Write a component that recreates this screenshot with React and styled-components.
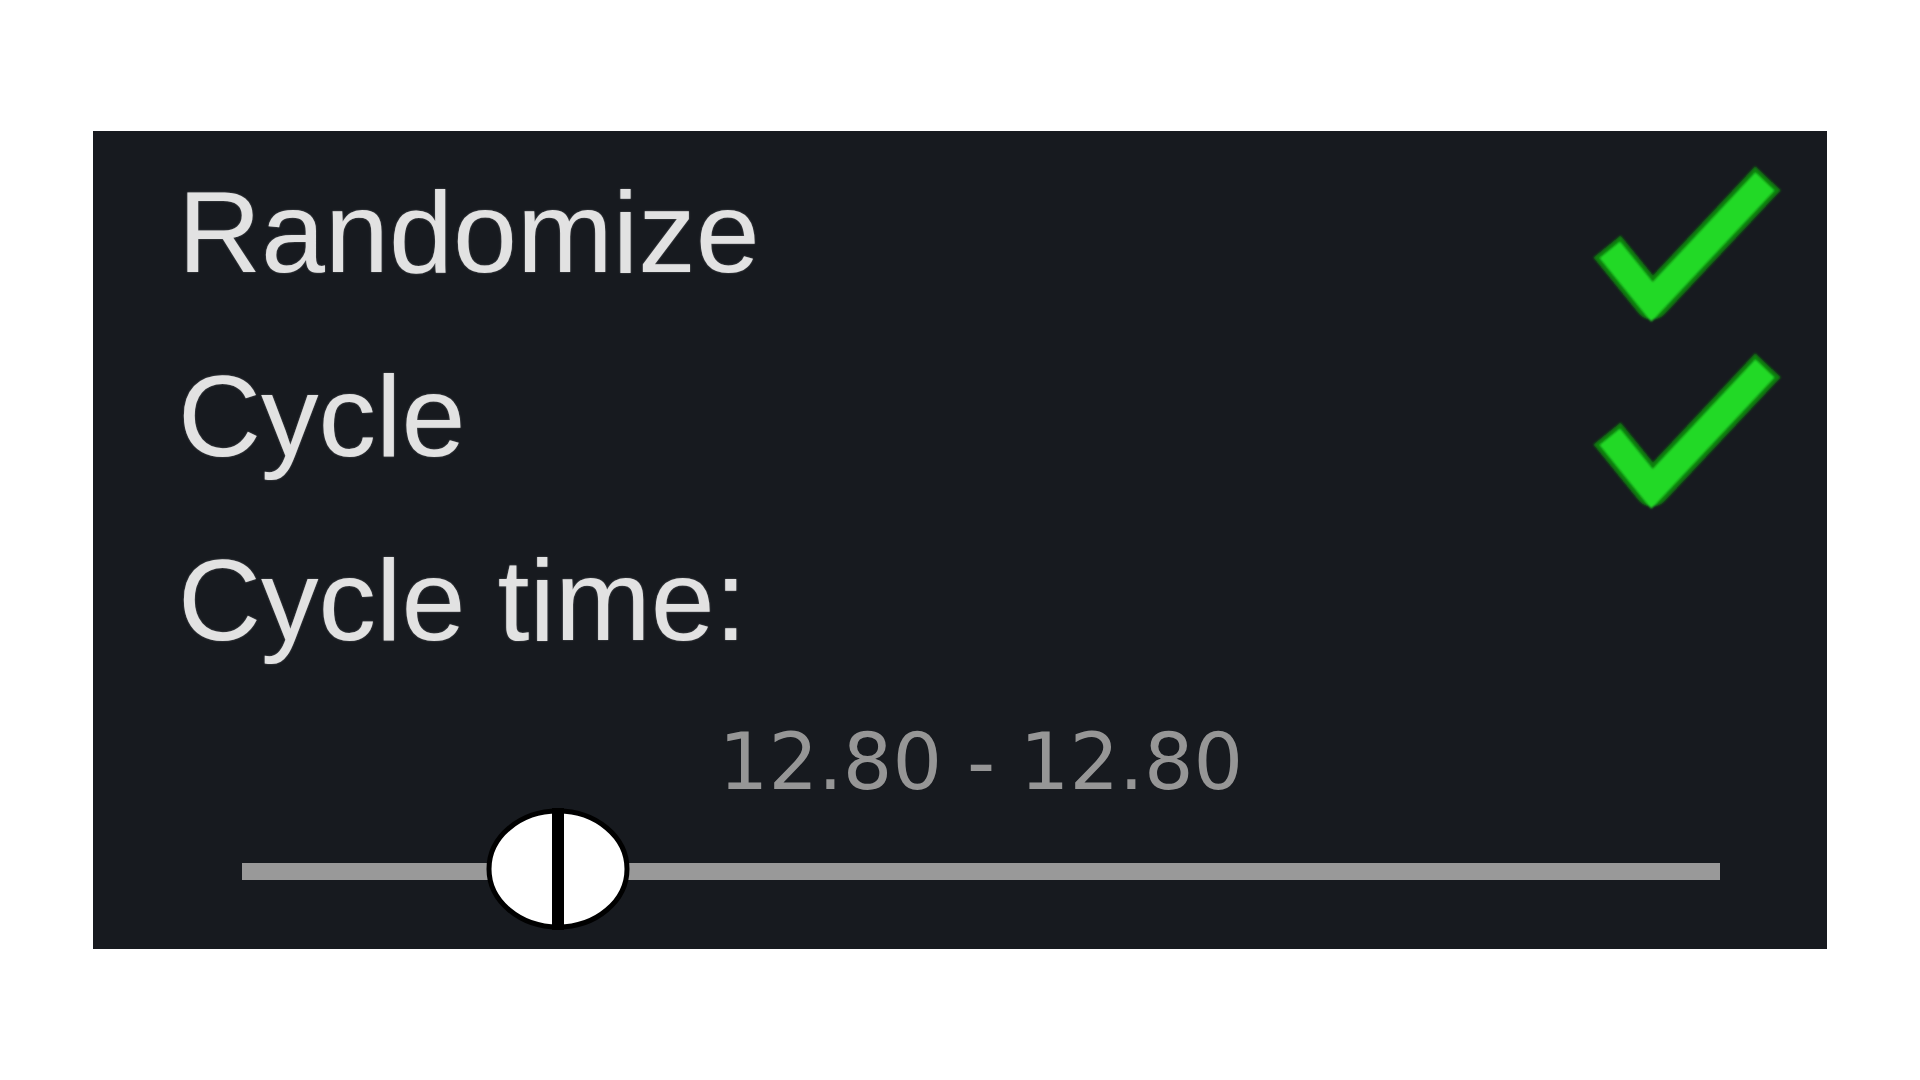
import React from 'react';
import styled, { createGlobalStyle } from 'styled-components';

const GlobalStyle = createGlobalStyle`
  body {
    margin: 0;
    background: #ffffff;
  }
`;

const Page = styled.div`
  padding: 131px 0 0 93px;
`;

const Panel = styled.div`
  width: 1734px;
  box-sizing: border-box;
  background: #171a1f;
  padding: 9px 37px 19px 85px;
  display: flex;
  flex-direction: column;
`;

const Row = styled.div`
  height: 184px;
  display: flex;
  justify-content: space-between;
  align-items: flex-start;
`;

const Label = styled.span`
  font-family: "Liberation Sans", Arial, sans-serif;
  font-size: 115px;
  line-height: 184px;
  color: #e2e2e2;
  text-shadow: 0 0 2px rgba(226, 226, 226, 0.4);
`;

const CheckWrap = styled.div`
  margin-top: ${p => p.$offset}px;
  width: 205px;
  height: 175px;
`;

const Slider = styled.div`
  margin: 31px 70px 0 64px;
  display: flex;
  flex-direction: column;
`;

const RangeValue = styled.div`
  font-family: "DejaVu Sans", "Liberation Sans", sans-serif;
  font-weight: 400;
  font-size: 78px;
  line-height: 78px;
  height: 78px;
  color: #969696;
  text-align: center;
`;

const TrackArea = styled.div`
  position: relative;
  height: 122px;
  margin-top: 7px;
`;

const TrackBar = styled.div`
  margin-top: 55px;
  height: 17px;
  background: #999999;
`;

const Thumb = styled.svg`
  position: absolute;
  top: 0;
  width: 144px;
  height: 122px;
`;

function Check({ offset, id }) {
  return (
    <CheckWrap $offset={offset}>
      <svg width="205" height="175" viewBox="0 0 205 175">
        <defs>
          <filter id={id} filterUnits="userSpaceOnUse" x="0" y="0" width="205" height="175">
            <feGaussianBlur stdDeviation="1.3" />
          </filter>
        </defs>
        <g filter={`url(#${id})`}>
          <polyline
            points="33,101 67,143 171,32"
            fill="none"
            stroke="#0f7f10"
            strokeWidth="35"
            strokeLinecap="square"
            strokeLinejoin="round"
          />
          <polyline
            points="33,101 67,143 171,32"
            fill="none"
            stroke="#23d926"
            strokeWidth="26"
            strokeLinecap="square"
            strokeLinejoin="miter"
          />
        </g>
      </svg>
    </CheckWrap>
  );
}

function RangeSlider({ min, max, low, high }) {
  const pct = ((low - min) / (max - min)) * 100;
  return (
    <Slider>
      <RangeValue>{low.toFixed(2)} - {high.toFixed(2)}</RangeValue>
      <TrackArea>
        <TrackBar />
        <Thumb viewBox="0 0 144 122" style={{ left: `calc(${pct}% - 71px)` }}>
          <ellipse cx="72" cy="61" rx="69" ry="58" fill="#ffffff" stroke="#000000" strokeWidth="5" />
          <rect x="66" y="0" width="12" height="122" fill="#000000" />
        </Thumb>
      </TrackArea>
    </Slider>
  );
}

export default function App() {
  return (
    <Page>
      <GlobalStyle />
      <Panel>
        <Row>
          <Label>Randomize</Label>
          <Check offset={19} id="soft1" />
        </Row>
        <Row>
          <Label>Cycle</Label>
          <Check offset={22} id="soft2" />
        </Row>
        <Row>
          <Label>Cycle time:</Label>
        </Row>
        <RangeSlider min={0} max={60} low={12.8} high={12.8} />
      </Panel>
    </Page>
  );
}
